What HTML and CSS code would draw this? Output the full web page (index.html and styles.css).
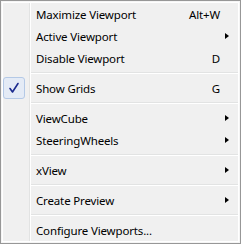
FILE: index.html
```html
<!DOCTYPE html>
<html>
<head>
<meta charset="utf-8">
<link rel="stylesheet" href="styles.css">
</head>
<body>
<div class="menu">
  <div class="item"><span class="check"></span><span class="label">Maximize Viewport</span><span class="key">Alt+W</span><span class="sub"></span></div>
  <div class="item"><span class="check"></span><span class="label">Active Viewport</span><span class="key"></span><span class="sub"><span class="arrow"></span></span></div>
  <div class="item"><span class="check"></span><span class="label">Disable Viewport</span><span class="key">D</span><span class="sub"></span></div>
  <div class="sep"></div>
  <div class="item"><span class="check on"><svg width="22" height="22" viewBox="0 0 22 22"><path d="M7 11.5 L9.5 15 L15 6.5" fill="none" stroke="#1b2a8e" stroke-width="1.6" stroke-linecap="round" stroke-linejoin="round"/></svg></span><span class="label">Show Grids</span><span class="key">G</span><span class="sub"></span></div>
  <div class="sep"></div>
  <div class="item"><span class="check"></span><span class="label">ViewCube</span><span class="key"></span><span class="sub"><span class="arrow"></span></span></div>
  <div class="item"><span class="check"></span><span class="label">SteeringWheels</span><span class="key"></span><span class="sub"><span class="arrow"></span></span></div>
  <div class="sep"></div>
  <div class="item"><span class="check"></span><span class="label">xView</span><span class="key"></span><span class="sub"><span class="arrow"></span></span></div>
  <div class="sep"></div>
  <div class="item"><span class="check"></span><span class="label">Create Preview</span><span class="key"></span><span class="sub"><span class="arrow"></span></span></div>
  <div class="sep"></div>
  <div class="item"><span class="check"></span><span class="label">Configure Viewports...</span><span class="key"></span><span class="sub"></span></div>
</div>
</body>
</html>
```

FILE: styles.css
```css
html, body {
  margin: 0;
  padding: 0;
  background: #ffffff;
}
.menu {
  box-sizing: border-box;
  width: 241px;
  height: 244px;
  border: 1px solid #979797;
  box-shadow: inset 0 0 0 1px #f5f5f5;
  padding: 2px;
  background-color: #f0f0f0;
  background-image: linear-gradient(to right, transparent 26px, #e2e3e3 26px, #e2e3e3 27px, #ffffff 27px, #ffffff 28px, transparent 28px);
  background-origin: content-box;
  background-clip: content-box;
  font-family: "Noto Sans", "Open Sans", sans-serif;
  font-size: 11.5px;
  letter-spacing: -0.15px;
  color: #000;
  display: flex;
  flex-direction: column;
}
.item {
  height: 22px;
  display: flex;
  align-items: center;
}
.check {
  width: 22px;
  height: 22px;
  margin-right: 11px;
  box-sizing: border-box;
  flex: none;
}
.check.on {
  border: 1px solid #b4c9e6;
  border-radius: 3px;
  background: #e4ebf6;
}
.check.on svg {
  display: block;
  margin: -1px;
}
.label {
  flex: 1;
  white-space: nowrap;
}
.key {
  white-space: nowrap;
}
.sub {
  width: 18px;
  flex: none;
  display: flex;
  align-items: center;
}
.arrow {
  margin-left: 5px;
  width: 0;
  height: 0;
  border-top: 3.5px solid transparent;
  border-bottom: 3.5px solid transparent;
  border-left: 4px solid #000;
}
.sep {
  height: 8px;
  margin-left: 28px;
  box-sizing: border-box;
  padding-top: 3px;
}
.sep::before {
  content: "";
  display: block;
  height: 1px;
  background: #e2e3e3;
  border-bottom: 1px solid #ffffff;
}
```
